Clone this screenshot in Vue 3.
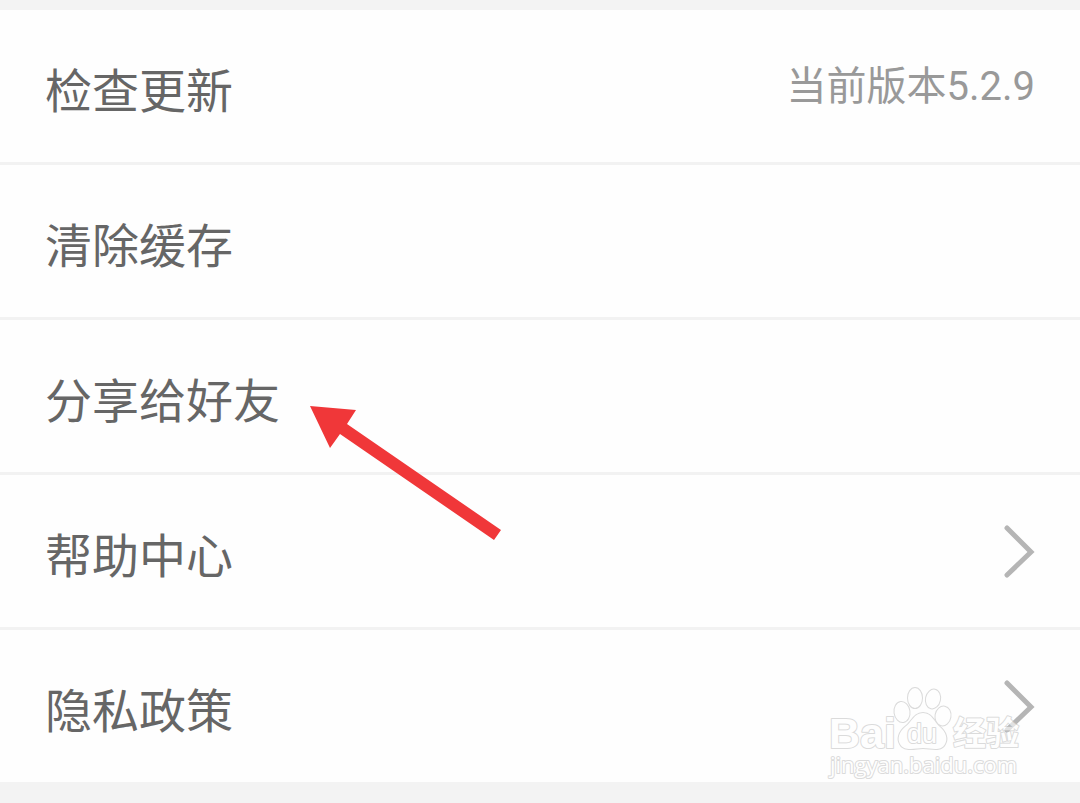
<script setup>
const rows = [
  { label: '检查更新', value: '当前版本5.2.9' },
  { label: '清除缓存' },
  { label: '分享给好友', pointed: true },
  { label: '帮助中心', href: '#help' },
  { label: '隐私政策', href: '#privacy' },
]
</script>

<template>
  <main class="settings">
    <ul class="list">
      <li v-for="row in rows" :key="row.label" class="item">
        <component
          :is="row.href ? 'a' : 'button'"
          class="row"
          :href="row.href"
          :type="row.href ? undefined : 'button'"
        >
          <span class="label">{{ row.label }}</span>
          <span v-if="row.value" class="value">{{ row.value }}</span>
          <svg v-if="row.href" class="chevron" viewBox="0 0 32 56" aria-hidden="true">
            <path d="M4 5 28 29 4 52" />
          </svg>
        </component>
        <svg v-if="row.pointed" class="arrow" viewBox="0 0 194 136" aria-hidden="true">
          <path d="M1 1 47 5 38 19 192 125 185 135 31 29 21 43Z" />
        </svg>
      </li>
    </ul>

    <svg class="watermark" viewBox="0 0 200 98" role="img" aria-label="Baidu 经验">
      <g class="outline">
        <text class="brand" x="3" y="61">Bai</text>
        <ellipse cx="76" cy="25" rx="7.500" ry="10" transform="rotate(-8 76 25)" />
        <ellipse cx="89" cy="11" rx="7" ry="10" />
        <ellipse cx="107" cy="12" rx="7" ry="9.500" transform="rotate(12 107 12)" />
        <ellipse cx="117" cy="29" rx="7.500" ry="9.500" transform="rotate(10 117 29)" />
        <path d="M97 26C88 26 86 35 79 40C73 45 71 52 74 57C78 65 90 61 97 61C105 61 115 65 119 57C122 52 120 45 114 40C108 35 106 26 97 26Z" />
        <text class="du" x="81" y="56">du</text>
        <text class="cjk" x="127" y="58">经验</text>
        <text class="site" x="4" y="86">jingyan.baidu.com</text>
      </g>
    </svg>
  </main>
</template>

<style>
body {
  margin: 0;
  background: #f3f3f3;
}
</style>

<style scoped>
.settings {
  position: relative;
  margin-top: 10px;
  font-family: Roboto, "Noto Sans CJK SC", sans-serif;
}

.list {
  margin: 0;
  padding: 0;
  list-style: none;
  background: #fefefe;
}

.item {
  position: relative;
}

.item + .item {
  border-top: 3px solid #f2f2f2;
}

.row {
  display: flex;
  align-items: center;
  justify-content: space-between;
  box-sizing: border-box;
  width: 100%;
  min-height: 152px;
  padding: 0 45px;
  border: 0;
  background: transparent;
  color: #666;
  font-family: inherit;
  text-align: left;
  text-decoration: none;
  cursor: pointer;
}

.label {
  padding-top: 12px;
  font-size: 47px;
  line-height: 64px;
}

.value {
  padding-top: 2px;
  color: #999;
  font-size: 40px;
  line-height: 56px;
}

.chevron {
  width: 32px;
  height: 56px;
  fill: none;
  stroke: #b5b5b5;
  stroke-width: 5;
  stroke-linecap: round;
}

.arrow {
  position: absolute;
  top: 85px;
  left: 309px;
  width: 194px;
  height: 136px;
  z-index: 1;
  fill: #f03739;
  pointer-events: none;
}

.watermark {
  position: absolute;
  right: 54px;
  bottom: -3px;
  width: 200px;
  height: 98px;
  pointer-events: none;
}

.outline {
  fill: #fff;
  stroke: #c4c4c4;
  stroke-width: 2;
  stroke-linejoin: round;
  paint-order: stroke;
  opacity: 0.6;
}

.brand {
  font: bold 43px "Liberation Sans", sans-serif;
}

.du {
  font: 27px "Liberation Sans", sans-serif;
}

.cjk {
  font: bold 33px "Noto Sans CJK SC", sans-serif;
}

.site {
  font: 22px "Open Sans", sans-serif;
}
</style>
